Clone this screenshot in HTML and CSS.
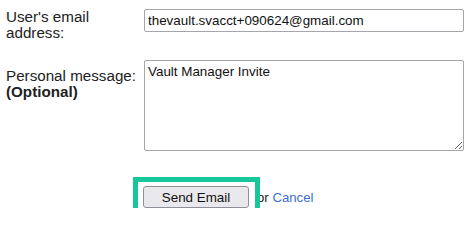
FILE: index.html
```html
<!DOCTYPE html>
<html lang="en">
<head>
<meta charset="utf-8">
<title>Invite user</title>
<link rel="stylesheet" href="styles.css">
</head>
<body>
<form class="invite">
  <label class="lbl" for="email">User's email<br>address:</label>
  <input class="field" id="email" type="text" value="thevault.svacct+090624@gmail.com">

  <label class="lbl lbl-msg" for="msg">Personal message:<br><b class="opt">(Optional)</b></label>
  <textarea class="field area" id="msg">Vault Manager Invite</textarea>

  <div class="actions">
    <button class="btn" type="button">Send Email</button>
    <span class="alt">or <a class="link" href="#">Cancel</a></span>
    <span class="hl"></span>
  </div>
</form>
</body>
</html>
```

FILE: styles.css
```css
* { box-sizing: border-box; }

html, body {
  margin: 0;
  background: #ffffff;
}

body {
  font-family: "Liberation Sans", Arial, sans-serif;
  color: #222222;
}

.invite {
  display: grid;
  grid-template-columns: 138px 320px;
  row-gap: 19px;
  align-items: start;
  padding: 9px 0 0 6px;
}

.lbl {
  font-size: 15.2px;
  line-height: 16px;
  color: #222222;
}

.lbl-msg {
  padding-top: 8px;
}

.opt {
  font-weight: bold;
}

.field {
  width: 320px;
  font-family: "Liberation Sans", Arial, sans-serif;
  font-size: 13.4px;
  color: #111111;
  border: 1px solid #a5a5ad;
  border-radius: 2px;
  background: #ffffff;
  padding: 0 3px;
  margin: 0;
  outline: none;
}

input.field {
  height: 23px;
}

.area {
  height: 91px;
  padding: 3px 3px;
  resize: both;
  display: block;
}

.actions {
  grid-column: 2;
  margin-top: 16px;
  position: relative;
  display: flex;
  align-items: baseline;
}

.btn {
  width: 106px;
  height: 22px;
  margin: 0 8px 0 -1px;
  padding: 0;
  font-family: "Liberation Sans", Arial, sans-serif;
  font-size: 13.4px;
  color: #111111;
  background: #e9e9ed;
  border: 1px solid #8f8f99;
  border-radius: 3px;
}

.alt {
  font-size: 13.2px;
  color: #222222;
}

.link {
  color: #3b6fd1;
  text-decoration: none;
}

.hl {
  position: absolute;
  left: -11px;
  top: -9px;
  width: 127px;
  height: 41px;
  border: 5px solid #17c79c;
  pointer-events: none;
}
```
